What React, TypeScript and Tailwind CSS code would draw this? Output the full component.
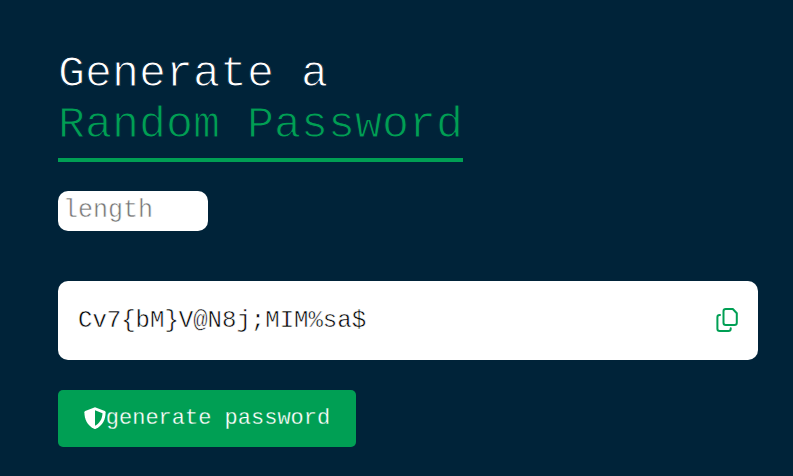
function CopyIcon() {
  return (
    <svg className="mb-[2px] h-[26px] w-[22px] text-[#009f54]" viewBox="0 0 22 26" fill="none" stroke="currentColor" strokeWidth="2" strokeLinejoin="round" strokeLinecap="round">
      <path d="M7.5 4.3a2.3 2.3 0 0 1 2.3-2.3h7l4 4.2v9.5a2.3 2.3 0 0 1-2.3 2.3H9.8a2.3 2.3 0 0 1-2.3-2.3z" />
      <path d="M4 8h-.3a2.3 2.3 0 0 0-2.3 2.3v11.4A2.3 2.3 0 0 0 3.7 24h8.7a2.3 2.3 0 0 0 2.3-2.3v-.4" />
    </svg>
  );
}

function ShieldIcon() {
  return (
    <svg className="mb-[2px] h-[24px] w-[22px] shrink-0" viewBox="0 0 22 24" fill="none">
      <path d="M11 1.2 20.8 4.9c.5.2.8.7.8 1.3 0 7-2.9 13.2-9.7 16.5q-.9.4-1.8 0C3.3 19.4.4 13.2.4 6.2c0-.6.3-1.1.8-1.3z" fill="currentColor" />
      <path d="M11 4.3v15.4c4.9-2.6 7.3-7.1 7.5-12.5z" fill="#009f54" />
    </svg>
  );
}

export default function App() {
  return (
    <main className="h-screen w-screen overflow-hidden bg-[#002339] pl-[58px] pt-[49px] font-['Courier_New','Liberation_Mono',monospace]">
      <h1 className="w-[405px] border-b-4 border-[#009f54] pb-[7px] text-[45px] leading-[51px] whitespace-nowrap text-white [-webkit-text-stroke:1px_#002339]">
        Generate a<br />
        <span className="text-[#009f54]">Random Password</span>
      </h1>
      <input placeholder="length" className="mt-[29px] block h-[40px] w-[150px] rounded-[10px] bg-white px-[5px] pb-[2px] text-[25px] text-black outline-none placeholder:text-[#757575] [-webkit-text-stroke:0.5px_white]" />
      <section className="mt-[50px] flex h-[79px] w-[700px] items-center justify-between rounded-[10px] bg-white px-[20px] text-[24px] text-black">
        <span className="[-webkit-text-stroke:0.5px_white]">{"Cv7{bM}V@N8j;MIM%sa$"}</span>
        <button aria-label="Copy password"><CopyIcon /></button>
      </section>
      <button className="mt-[30px] flex h-[57px] w-[298px] items-center justify-center rounded-[5px] bg-[#009f54] text-[22px] text-white">
        <ShieldIcon />
        <span className="[-webkit-text-stroke:0.3px_#009f54]">generate password</span>
      </button>
    </main>
  );
}
